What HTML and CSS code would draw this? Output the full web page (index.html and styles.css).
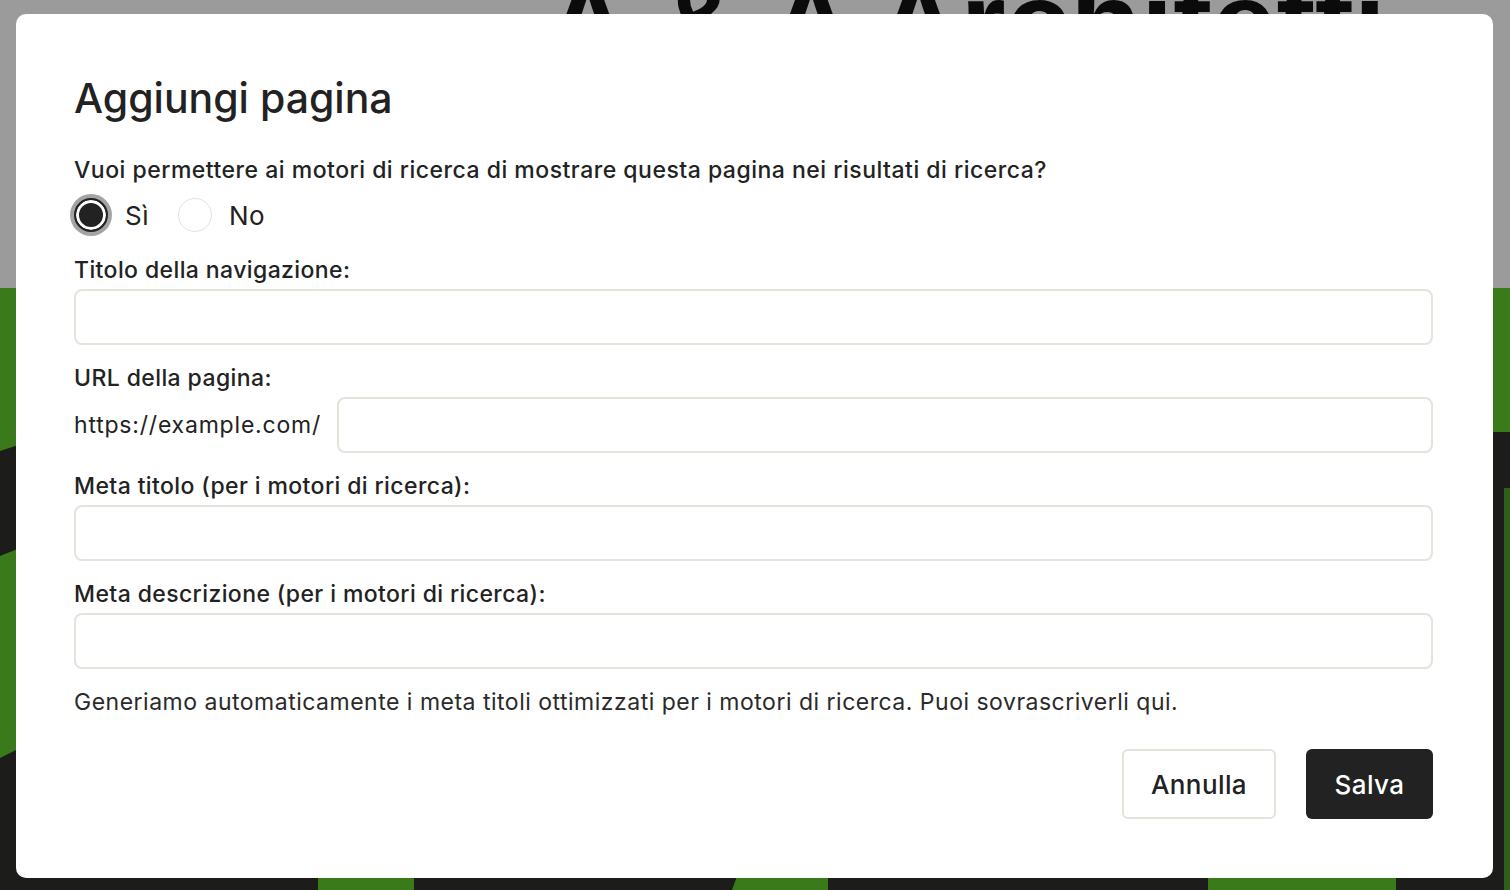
FILE: index.html
```html
<!DOCTYPE html>
<html lang="it">
<head>
  <meta charset="UTF-8">
  <meta name="viewport" content="width=device-width, initial-scale=1.0">
  <title>Aggiungi pagina</title>
  <link rel="stylesheet" href="styles.css">
</head>
<body>
  <div class="site">
    <header class="site-header">
      <h1 class="site-title">A &amp; A Architetti</h1>
    </header>
    <section class="hero">
      <!-- hero artwork: dark diagonal bands over green -->
      <svg class="hero-art" viewBox="0 0 1510 602" preserveAspectRatio="none">
        <rect width="1510" height="602" fill="#3a7a1b"/>
        <path d="M0 163 L40 150 L40 252 L0 268 Z" fill="#1c1d1b"/>
        <path d="M0 470 L40 450 L40 602 L0 602 Z" fill="#1c1d1b"/>
        <path d="M1470 144 L1510 144 L1510 602 L1470 602 Z" fill="#1c1d1b"/>
        <rect x="1504" y="200" width="6" height="402" fill="#2f5f1a"/>
        <path d="M40 580 L318 580 L318 602 L40 602 Z" fill="#1c1d1b"/>
        <path d="M414 580 L740 580 L732 602 L414 602 Z" fill="#1c1d1b"/>
        <path d="M828 580 L1208 580 L1208 602 L828 602 Z" fill="#1c1d1b"/>
        <path d="M1396 580 L1470 580 L1470 602 L1396 602 Z" fill="#1c1d1b"/>
      </svg>
    </section>
  </div>

  <div class="modal-backdrop">
    <form class="modal">
      <h2 class="modal-title">Aggiungi pagina</h2>

      <p class="question">Vuoi permettere ai motori di ricerca di mostrare questa pagina nei risultati di ricerca?</p>
      <div class="radio-row">
        <label class="radio">
          <input type="radio" name="indexable" value="yes" checked>
          <span>Sì</span>
        </label>
        <label class="radio">
          <input type="radio" name="indexable" value="no">
          <span>No</span>
        </label>
      </div>

      <div class="field">
        <label class="field-label" for="nav-title">Titolo della navigazione:</label>
        <input class="text-input" type="text" id="nav-title">
      </div>

      <div class="field">
        <label class="field-label" for="page-url">URL della pagina:</label>
        <div class="url-row">
          <span class="url-prefix">https://example.com/</span>
          <input class="text-input" type="text" id="page-url">
        </div>
      </div>

      <div class="field">
        <label class="field-label" for="meta-title">Meta titolo (per i motori di ricerca):</label>
        <input class="text-input" type="text" id="meta-title">
      </div>

      <div class="field">
        <label class="field-label" for="meta-desc">Meta descrizione (per i motori di ricerca):</label>
        <input class="text-input" type="text" id="meta-desc">
      </div>

      <p class="help">Generiamo automaticamente i meta titoli ottimizzati per i motori di ricerca. Puoi sovrascriverli qui.</p>

      <div class="actions">
        <button type="button" class="btn btn-secondary">Annulla</button>
        <button type="button" class="btn btn-primary">Salva</button>
      </div>
    </form>
  </div>
</body>
</html>
```

FILE: styles.css
```css
html, body {
  margin: 0;
  padding: 0;
  height: 100%;
  overflow: hidden;
}

body {
  font-family: Inter, 'Noto Sans', sans-serif;
  color: #222;
}

/* Page behind the dialog (already dimmed) */
.site {
  height: 100%;
  display: flex;
  flex-direction: column;
}

.site-header {
  height: 288px;
  background-color: #9b9b9b;
  overflow: hidden;
  padding-left: 546px;
}

.site-title {
  margin: -35px 0 0;
  font-family: 'Liberation Sans', Arial, sans-serif;
  font-weight: bold;
  font-size: 116px;
  line-height: 116px;
  color: #0b0b0b;
  white-space: nowrap;
}

.hero {
  flex: 1;
  display: flex;
}

.hero-art {
  width: 100%;
  height: 100%;
  display: block;
}

/* Dialog */
.modal-backdrop {
  position: fixed;
  inset: 0;
  padding: 14px 17px 12px 16px;
  display: flex;
}

.modal {
  flex: 1;
  background-color: #fff;
  border-radius: 10px;
  padding: 58px 60px 59px 58px;
  display: flex;
  flex-direction: column;
}

.modal-title {
  margin: 0 0 32px;
  font-size: 41px;
  line-height: 52px;
  font-weight: 500;
  letter-spacing: 0;
}

.question {
  margin: 0 0 9px;
  font-size: 23px;
  line-height: 28px;
  font-weight: 500;
  letter-spacing: 0.5px;
}

.radio-row {
  display: flex;
  align-items: center;
  gap: 29px;
  height: 44px;
  margin-bottom: 19px;
}

.radio {
  display: flex;
  align-items: center;
  gap: 17px;
  font-size: 26px;
  letter-spacing: 0.5px;
  cursor: pointer;
}

.radio input {
  appearance: none;
  margin: 0;
  width: 34px;
  height: 34px;
  border-radius: 50%;
  border: 1.5px solid #e6e3dc;
  background-color: #fff;
}

.radio input:checked {
  border: 2px solid #222;
  background-color: #222;
  box-shadow: inset 0 0 0 3px #fff, 0 0 0 4px #a4a4a4;
}

.field {
  display: flex;
  flex-direction: column;
  gap: 5px;
  margin-bottom: 19px;
}

.field-label {
  font-size: 23px;
  line-height: 28px;
  font-weight: 500;
  letter-spacing: 0.4px;
}

.text-input {
  box-sizing: border-box;
  height: 56px;
  width: 100%;
  border: 2px solid #e6e3dc;
  border-radius: 8px;
  padding: 0 16px;
  font-family: inherit;
  font-size: 20px;
  color: #222;
  background-color: #fff;
}

.url-row {
  display: flex;
  align-items: center;
  gap: 16px;
}

.url-prefix {
  font-size: 23px;
  letter-spacing: 0.8px;
  white-space: nowrap;
}

.url-row .text-input {
  flex: 1;
}

.help {
  margin: 0 0 33px;
  font-size: 23px;
  line-height: 28px;
  letter-spacing: 0.5px;
  color: #2a2a2a;
}

.actions {
  display: flex;
  justify-content: flex-end;
  gap: 30px;
}

.btn {
  height: 70px;
  border-radius: 6px;
  font-family: inherit;
  font-size: 26px;
  font-weight: 500;
  letter-spacing: 0.4px;
  cursor: pointer;
}

.btn-secondary {
  width: 154px;
  background-color: #fff;
  color: #222;
  border: 2px solid #e6e3dc;
}

.btn-primary {
  width: 127px;
  background-color: #222;
  color: #fff;
  border: none;
}
```
